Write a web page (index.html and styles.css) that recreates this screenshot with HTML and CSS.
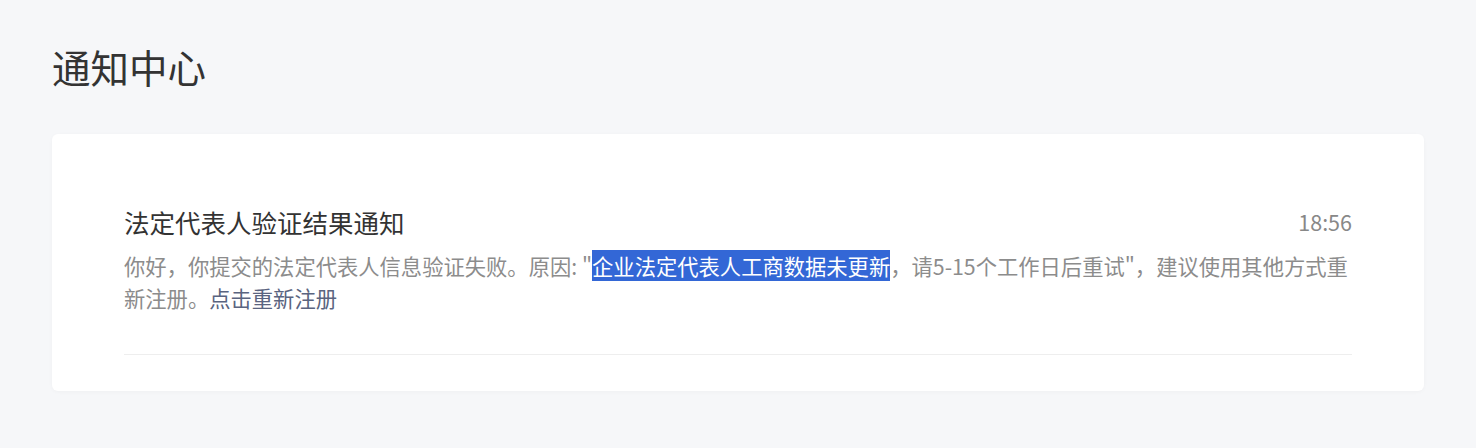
FILE: index.html
```html
<!DOCTYPE html>
<html lang="zh-CN">
<head>
    <meta charset="UTF-8">
    <meta name="viewport" content="width=device-width, initial-scale=1.0">
    <title>通知中心</title>
    <link rel="stylesheet" href="styles.css">
</head>
<body>
    <div class="page">
        <h1 class="page-title">通知中心</h1>

        <div class="notice-card">
            <!-- one notice -->
            <div class="notice-item">
                <div class="notice-header">
                    <div class="notice-title">法定代表人验证结果通知</div>
                    <div class="notice-time">18:56</div>
                </div>
                <p class="notice-body">你好，你提交的法定代表人信息验证失败。原因: "<span class="selected">企业法定代表人工商数据未更新</span>，请5-15个工作日后重试"，建议使用其他方式重新注册。<a class="notice-link" href="#">点击重新注册</a></p>
            </div>
        </div>
    </div>
</body>
</html>
```
FILE: styles.css
```css
/* Notification center */
body {
    margin: 0;
    background-color: #f6f7f9;
    font-family: "Noto Sans CJK SC", "Noto Sans", sans-serif;
    color: #333;
}

.page {
    padding: 40px 52px 56px;
}

.page-title {
    margin: 0;
    font-size: 38.5px;
    line-height: 52px;
    font-weight: normal;
    color: #333;
}

.notice-card {
    margin-top: 42px;
    background-color: #fff;
    border-radius: 6px;
    box-shadow: 0 1px 4px rgba(0, 0, 0, 0.03);
    padding: 71px 72px 36px;
}

.notice-item {
    padding-bottom: 40px;
    border-bottom: 1px solid #eeeeee;
}

.notice-header {
    display: flex;
    justify-content: space-between;
    align-items: center;
}

.notice-title {
    font-size: 25.5px;
    line-height: 34px;
    color: #333;
}

.notice-time {
    font-size: 21.5px;
    line-height: 34px;
    color: #888;
}

.notice-body {
    margin: 11px 0 0;
    font-size: 21.3px;
    line-height: 32px;
    color: #8c8c8c;
}

.selected {
    background-color: #3367d6;
    color: #fff;
}

.notice-link {
    color: #5a6480;
    text-decoration: none;
}
```
